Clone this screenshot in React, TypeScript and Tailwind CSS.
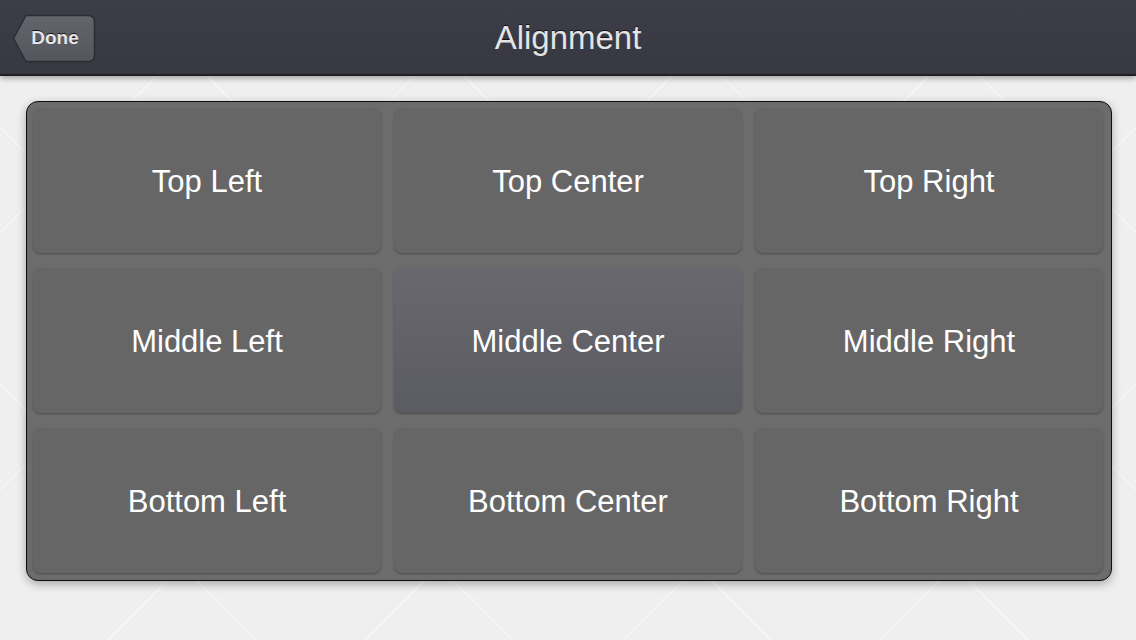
import React from 'react';

const cells = [
  'Top Left',
  'Top Center',
  'Top Right',
  'Middle Left',
  'Middle Center',
  'Middle Right',
  'Bottom Left',
  'Bottom Center',
  'Bottom Right',
];

const DoneButton = () => (
  <button className="relative mt-[2px] h-[49px] w-[84px] text-[19px] font-bold text-[#e6e6e8] [text-shadow:0_-1px_0_rgba(0,0,0,0.8)]">
    <svg className="absolute inset-0" width="84" height="49" viewBox="0 0 84 49">
      <defs>
        <linearGradient id="doneBg" x1="0" y1="0" x2="0" y2="1">
          <stop offset="0" stopColor="#64646c" />
          <stop offset="1" stopColor="#55555d" />
        </linearGradient>
      </defs>
      <path
        d="M14 1.5 H76 Q82.5 1.5 82.5 8 V41 Q82.5 47.5 76 47.5 H14 L1.5 24.5 Z"
        fill="url(#doneBg)"
        stroke="#2c2c33"
        strokeWidth="1.5"
        strokeLinejoin="round"
      />
    </svg>
    <span className="relative pl-[2px]">Done</span>
  </button>
);

export default function App() {
  return (
    <div className="flex h-[640px] w-[1136px] flex-col overflow-hidden bg-[#efefef] font-['Liberation_Sans',Arial,sans-serif]">
      <header className="relative z-10 flex h-[76px] shrink-0 items-center border-b-2 border-[#1f1f25] bg-gradient-to-b from-[#3d3d47] to-[#383842] px-[12px] shadow-[0_2px_6px_rgba(0,0,0,0.35)]">
        <DoneButton />
        <h1 className="absolute left-1/2 top-[18px] -translate-x-1/2 text-[33px] leading-[40px] text-[#e4e4e6] [text-shadow:0_-1px_0_rgba(0,0,0,0.7)]">
          Alignment
        </h1>
      </header>

      <main className="flex-1 bg-[repeating-linear-gradient(45deg,transparent_0,transparent_180px,rgba(255,255,255,0.35)_180px,rgba(255,255,255,0.35)_182px),repeating-linear-gradient(-45deg,transparent_0,transparent_180px,rgba(255,255,255,0.35)_180px,rgba(255,255,255,0.35)_182px)] pl-[26px] pr-[24px] pt-[25px]">
        <div className="h-[480px] rounded-[12px] border border-[#0d0d0d] bg-[#6c6c6c] shadow-[0_3px_10px_rgba(0,0,0,0.3)]">
          <div className="grid grid-cols-3 gap-x-[13px] gap-y-[15px] pb-[7px] pl-[6px] pr-[8px] pt-[6px]">
            {cells.map((label) => {
              const active = label === 'Middle Center';
              return (
                <div
                  key={label}
                  className={
                    active
                      ? 'flex h-[145px] items-center justify-center rounded-[8px] bg-gradient-to-b from-[#68686e] to-[#5b5b62] pt-[3px] text-[31px] text-white shadow-[0_1px_2px_rgba(0,0,0,0.35)]'
                      : 'flex h-[145px] items-center justify-center rounded-[8px] bg-[#666667] pt-[3px] text-[31px] text-white shadow-[0_1px_2px_rgba(0,0,0,0.3)]'
                  }
                >
                  {label}
                </div>
              );
            })}
          </div>
        </div>
      </main>
    </div>
  );
}
